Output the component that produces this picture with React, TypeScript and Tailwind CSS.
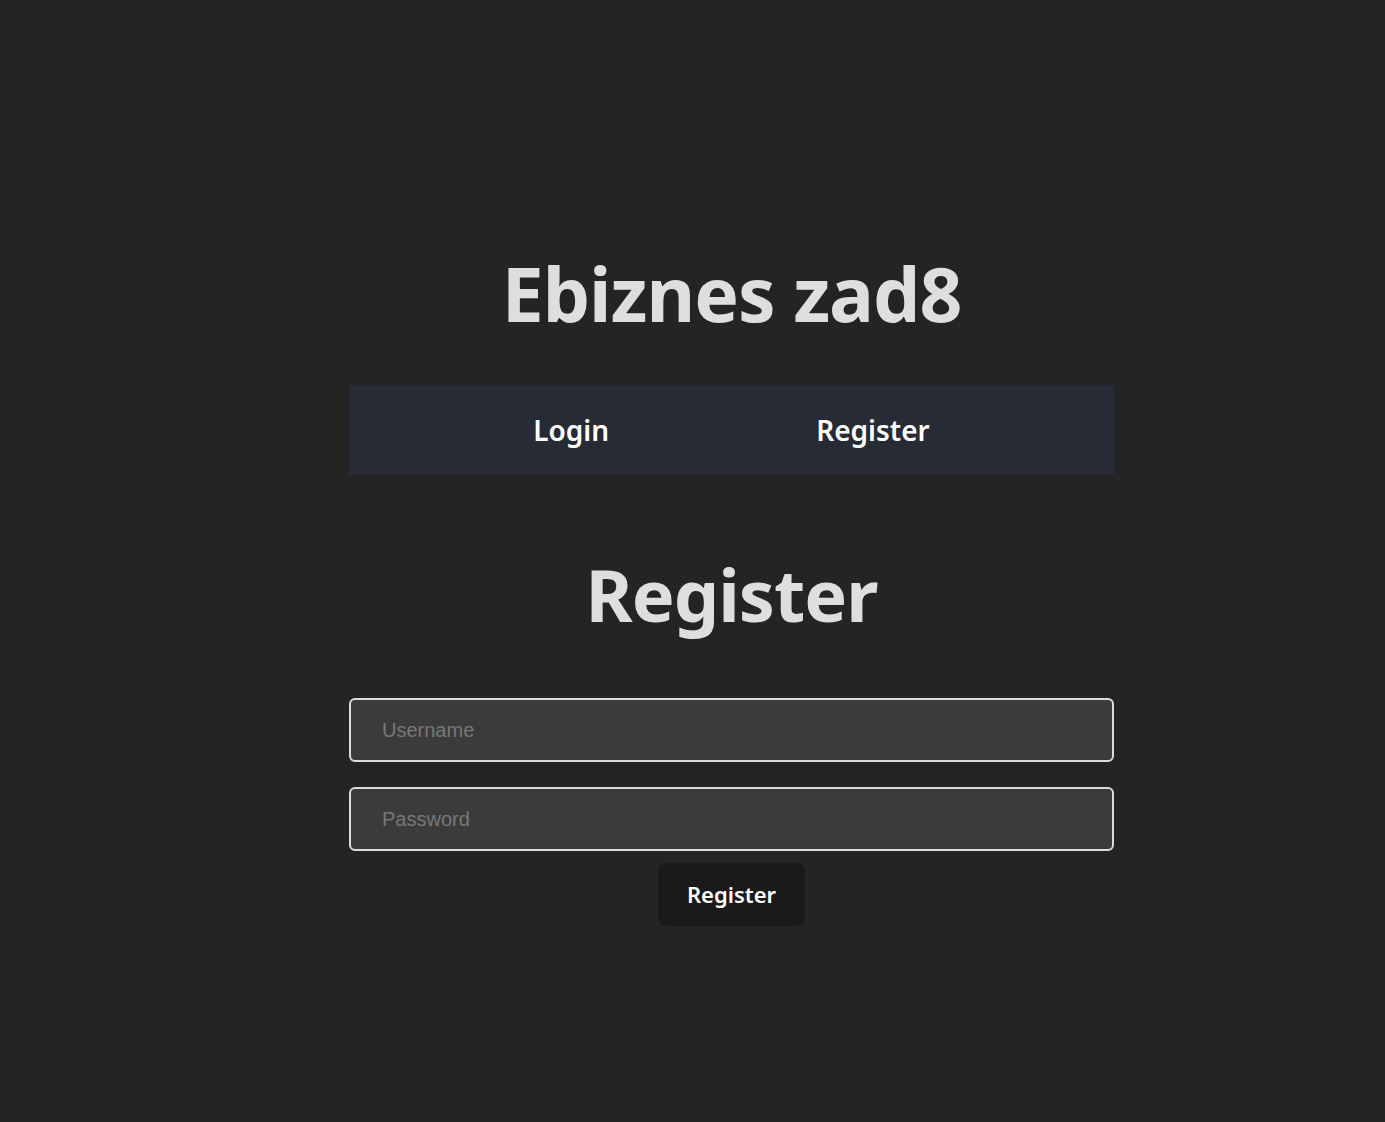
import { useState } from "react";

export default function App() {
  const [username, setUsername] = useState("");
  const [password, setPassword] = useState("");

  return (
    <div
      className="min-h-screen w-full bg-[#242424] text-[#dedede] pt-[238px]"
      style={{ fontFamily: '"Noto Sans", "Open Sans", sans-serif' }}
    >
      <div className="ml-[349px] w-[765px] flex flex-col items-center">
        <h1 className="text-[75px] font-bold leading-[110px] tracking-[-1px]">
          Ebiznes zad8
        </h1>

        <nav className="mt-[37px] w-full h-[90px] bg-[#272b35] flex justify-center items-center gap-[207px]">
          <a className="text-[28px] font-semibold text-white cursor-pointer">
            Login
          </a>
          <a className="text-[28px] font-semibold text-white cursor-pointer">
            Register
          </a>
        </nav>

        <h2 className="mt-[64px] text-[72px] font-bold leading-[110px] tracking-[-1px]">
          Register
        </h2>

        <form
          className="mt-[49px] w-full flex flex-col items-center"
          onSubmit={(e) => e.preventDefault()}
        >
          <input
            type="text"
            placeholder="Username"
            value={username}
            onChange={(e) => setUsername(e.target.value)}
            className="w-full h-[64px] rounded-[6px] border-2 border-[#dcdcdc] bg-[#3b3b3b] pl-[31px] text-[20px] text-white placeholder:text-[#787878] outline-none"
            style={{ fontFamily: '"Liberation Sans", Arial, sans-serif' }}
          />
          <input
            type="password"
            placeholder="Password"
            value={password}
            onChange={(e) => setPassword(e.target.value)}
            className="mt-[25px] w-full h-[64px] rounded-[6px] border-2 border-[#dcdcdc] bg-[#3b3b3b] pl-[31px] text-[20px] text-white placeholder:text-[#787878] outline-none"
            style={{ fontFamily: '"Liberation Sans", Arial, sans-serif' }}
          />
          <button
            type="submit"
            className="mt-[12px] w-[147px] h-[63px] rounded-[8px] bg-[#1a1a1a] text-white text-[22px] font-semibold cursor-pointer"
          >
            Register
          </button>
        </form>
      </div>
    </div>
  );
}
